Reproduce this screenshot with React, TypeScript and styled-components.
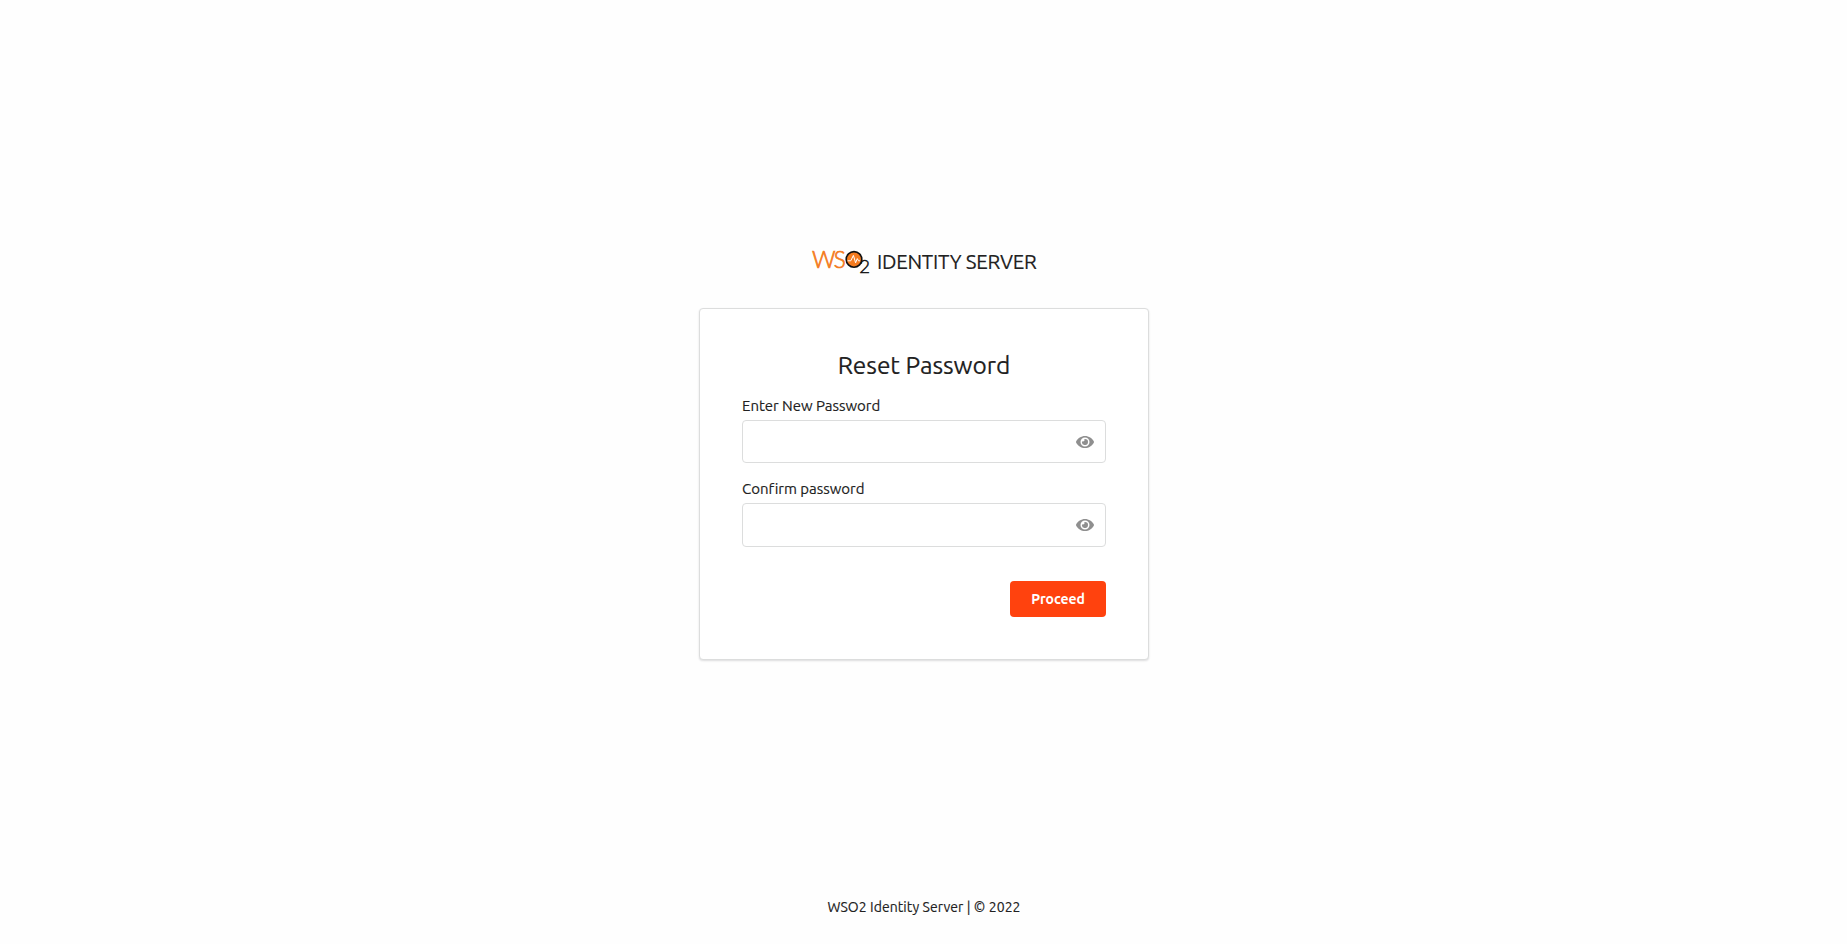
import React, { useState } from "react";
import styled, { createGlobalStyle } from "styled-components";

const GlobalStyle = createGlobalStyle`
  *, *::before, *::after { box-sizing: border-box; }
  body { margin: 0; background: #fefefe; }
  body, input, button { font-family: Ubuntu, "Noto Sans", "Open Sans", sans-serif; }
`;

const Page = styled.div`
  height: 944px;
  display: flex;
  flex-direction: column;
  align-items: center;
  color: #212121;
  background: #fefefe;
  -webkit-text-stroke: 0.15px currentColor;
`;

const Brand = styled.header`
  display: flex;
  height: 58px;
  margin-top: 250px;
  gap: 7px;
`;

const LogoMark = styled.svg`
  width: 59px;
  height: 26px;
  display: block;
  overflow: visible;
`;

const ProductName = styled.span`
  padding-left: 0.5px;
  font-size: 20.5px;
  line-height: 24px;
  letter-spacing: -0.27px;
  white-space: nowrap;
`;

const Card = styled.main`
  width: 450px;
  height: 352px;
  padding: 41px 42px;
  background: #fff;
  border: 1px solid #dcdddd;
  border-radius: 4px;
  box-shadow: 0 1px 2px rgba(34, 36, 38, 0.15);
`;

const Title = styled.h1`
  margin: 0 0 6.6px;
  padding-left: 1px;
  font-size: 24.5px;
  font-weight: 400;
  line-height: 30px;
  letter-spacing: -0.05px;
  text-align: center;
`;

const Field = styled.div`
  display: flex;
  flex-direction: column;
  height: 83.3px;
`;

const Label = styled.label`
  height: 33px;
  padding: 9px 0 0 0.5px;
  font-size: 15px;
  line-height: 20px;
  letter-spacing: -0.03px;
`;

const InputBox = styled.div`
  display: flex;
  align-items: center;
  height: 43.8px;
  padding-right: 11px;
  background: #fff;
  border: 1px solid #dcdddd;
  border-radius: 4px;
`;

const Input = styled.input`
  flex: 1;
  min-width: 0;
  height: 100%;
  padding: 0 14px;
  border: 0;
  outline: 0;
  background: transparent;
  font-size: 14px;
`;

const RevealButton = styled.button`
  display: flex;
  padding: 1px 0 0;
  border: 0;
  background: none;
  color: #8f8f8f;
  cursor: pointer;
`;

const Actions = styled.div`
  display: flex;
  justify-content: flex-end;
  margin-top: 27.8px;
`;

const ProceedButton = styled.button`
  width: 96px;
  height: 36px;
  padding: 0 0 0 1px;
  border: 0;
  border-radius: 4px;
  background: #ff420e;
  color: #fff;
  font-size: 14px;
  font-weight: 600;
  line-height: 36px;
  letter-spacing: -0.05px;
  -webkit-text-stroke: 0;
  cursor: pointer;
`;

const Footer = styled.footer`
  margin-top: auto;
  height: 47px;
  padding-left: 1px;
  font-size: 14px;
  line-height: 20px;
  letter-spacing: 0.07px;
`;

function Logo() {
  return (
    <LogoMark viewBox="0 0 59 26" aria-label="WSO2">
      <g fill="#f47b20" stroke="#f47b20" strokeWidth="0.7" fontFamily="Lato, sans-serif" fontWeight="300" fontSize="22.5">
        <text x="1" y="17.6" textLength="23.6" lengthAdjust="spacingAndGlyphs">W</text>
        <text x="22.8" y="17.6" textLength="12" lengthAdjust="spacingAndGlyphs">S</text>
      </g>
      <circle cx="43" cy="9.4" r="7.8" fill="#f47b20" stroke="#111" strokeWidth="1.6" />
      <path d="M36.6 10.8h3.2l2.6-5.4 2.2 7.4 1.7-4.2 1.2 2.2h1.5" fill="none" stroke="#fff" strokeWidth="1" />
      <text x="48.2" y="22.6" fill="#111" stroke="#111" strokeWidth="0.5" fontFamily="Lato, sans-serif" fontWeight="300" fontSize="18.5">2</text>
    </LogoMark>
  );
}

function EyeIcon() {
  return (
    <svg width="18" height="16" viewBox="0 0 576 512" fill="currentColor" aria-hidden="true">
      <path d="M572.52 241.4C518.29 135.59 410.93 64 288 64S57.68 135.64 3.48 241.41a32.35 32.35 0 0 0 0 29.19C57.71 376.41 165.07 448 288 448s230.32-71.64 284.52-177.41a32.35 32.35 0 0 0 0-29.19zM288 400a144 144 0 1 1 144-144 143.93 143.93 0 0 1-144 144zm0-240a95.31 95.31 0 0 0-25.31 3.79 47.85 47.85 0 0 1-66.9 66.9A95.78 95.78 0 1 0 288 160z" />
    </svg>
  );
}

function PasswordField({ id, label }: { id: string; label: string }) {
  const [visible, setVisible] = useState(false);
  return (
    <Field>
      <Label htmlFor={id}>{label}</Label>
      <InputBox>
        <Input id={id} type={visible ? "text" : "password"} />
        <RevealButton type="button" aria-label="Show password" onClick={() => setVisible(!visible)}>
          <EyeIcon />
        </RevealButton>
      </InputBox>
    </Field>
  );
}

export default function App() {
  return (
    <Page>
      <GlobalStyle />
      <Brand>
        <Logo />
        <ProductName>IDENTITY SERVER</ProductName>
      </Brand>
      <Card>
        <Title>Reset Password</Title>
        <PasswordField id="new-password" label="Enter New Password" />
        <PasswordField id="confirm-password" label="Confirm password" />
        <Actions>
          <ProceedButton type="submit">Proceed</ProceedButton>
        </Actions>
      </Card>
      <Footer>WSO2 Identity Server | © 2022</Footer>
    </Page>
  );
}
